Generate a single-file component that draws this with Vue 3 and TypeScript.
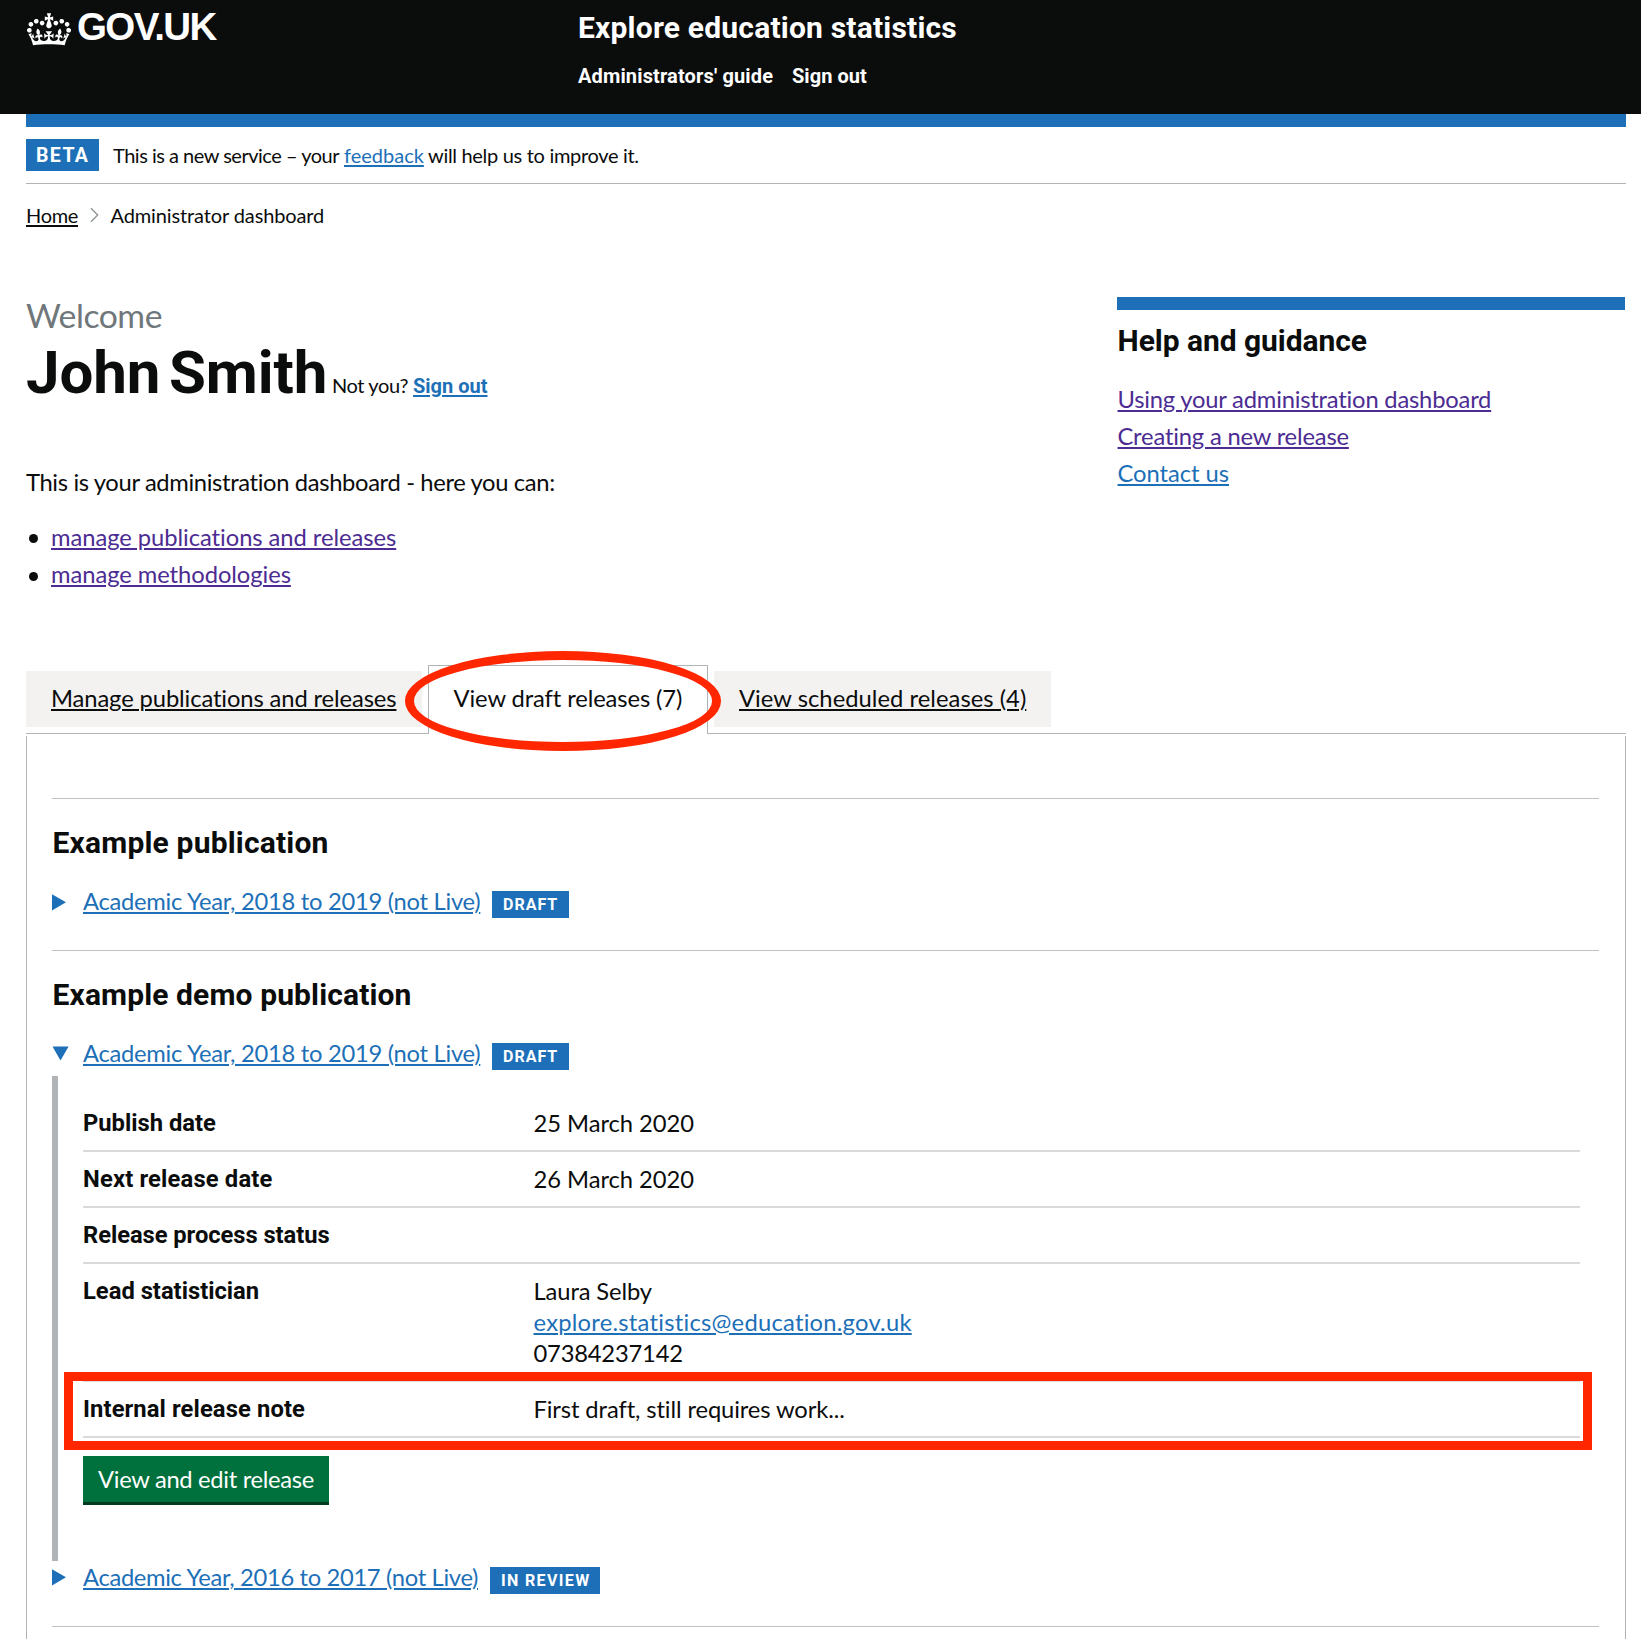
<script setup lang="ts">
interface Row {
  key: string
  lines: string[]
  email?: string
  phone?: string
  keyClass: string
  valueClass?: string
  highlighted?: boolean
}

const rows: Row[] = [
  { key: 'Publish date', lines: ['25 March 2020'], keyClass: 'k-publish', valueClass: 'v-date' },
  { key: 'Next release date', lines: ['26 March 2020'], keyClass: 'k-next', valueClass: 'v-date' },
  { key: 'Release process status', lines: [], keyClass: 'k-status' },
  {
    key: 'Lead statistician',
    lines: ['Laura Selby'],
    email: 'explore.statistics@education.gov.uk',
    phone: '07384237142',
    keyClass: 'k-lead',
    valueClass: 'v-name',
  },
  {
    key: 'Internal release note',
    lines: ['First draft, still requires work...'],
    keyClass: 'k-note',
    valueClass: 'v-note',
    highlighted: true,
  },
]
</script>

<template>
  <div class="page">
    <header class="header">
      <div class="brand">
        <svg class="crown" viewBox="0 0 132 97" aria-hidden="true">
          <path
            fill="currentColor"
            fill-rule="evenodd"
            d="M25 30.2c3.5 1.5 7.7-.2 9.1-3.7 1.5-3.6-.2-7.8-3.9-9.2-3.6-1.4-7.6.3-9.1 3.9-1.4 3.5.3 7.5 3.9 9zM9 39.5c3.6 1.5 7.8-.2 9.2-3.7 1.5-3.6-.2-7.8-3.9-9.1-3.6-1.5-7.6.2-9.1 3.8-1.4 3.5.3 7.5 3.8 9zM4.4 57.2c3.5 1.5 7.7-.2 9.1-3.8 1.5-3.6-.2-7.7-3.9-9.1-3.5-1.5-7.6.3-9.1 3.8-1.4 3.5.3 7.6 3.9 9.1zm38.3-21.4c3.5 1.5 7.7-.2 9.1-3.8 1.5-3.6-.2-7.7-3.9-9.1-3.6-1.5-7.6.3-9.1 3.8-1.3 3.6.4 7.7 3.9 9.1zm64.4-5.6c-3.6 1.5-7.8-.2-9.1-3.7-1.5-3.6.2-7.8 3.8-9.2 3.6-1.4 7.7.3 9.2 3.9 1.3 3.5-.4 7.5-3.9 9zm15.9 9.3c-3.6 1.5-7.7-.2-9.1-3.7-1.5-3.6.2-7.8 3.7-9.1 3.6-1.5 7.7.2 9.2 3.8 1.5 3.5-.3 7.5-3.8 9zm4.7 17.7c-3.6 1.5-7.8-.2-9.2-3.8-1.5-3.6.2-7.7 3.9-9.1 3.6-1.5 7.7.3 9.2 3.8 1.3 3.5-.4 7.6-3.9 9.1zM89.3 35.8c-3.6 1.5-7.8-.2-9.2-3.8-1.4-3.6.2-7.7 3.9-9.1 3.6-1.5 7.7.3 9.2 3.8 1.4 3.6-.3 7.7-3.9 9.1zM69.7 17.7l8.9 4.7V9.3l-8.9 2.8c-.2-.3-.5-.6-.9-.9L72.4 0H59.6l3.5 11.2c-.3.3-.6.5-.9.9l-8.8-2.8v13.1l8.8-4.7c.3.3.6.7.9.9l-5 15.4v.1c-.2.8-.4 1.6-.4 2.4 0 4.1 3.1 7.5 7 8.1h.2c.3 0 .7.1 1 .1.4 0 .7 0 1-.1h.2c4-.6 7.1-4.1 7.1-8.1 0-.8-.1-1.7-.4-2.4V34l-5.1-15.4c.4-.2.7-.6 1-.9zM66 92.8c16.9 0 32.8 1.1 47.1 3.2 4-16.9 8.9-26.7 14-33.5l-9.6-3.4c1 4.9 1.1 7.2 0 10.2-1.5-1.4-3-4.3-4.2-8.7L108.6 76c2.8-2 5-3.2 7.5-3.3-4.4 9.4-10 11.9-13.6 11.2-4.3-.8-6.3-4.6-5.6-7.9 1-4.7 5.7-5.9 8-.5 4.3-8.7-3-11.4-7.6-8.8 7.1-7.2 7.9-13.5 2.1-21.1-8 6.1-8.1 12.3-4.5 20.8-4.7-5.4-12.1-2.5-9.5 6.2 3.4-5.2 7.9-2 7.2 3.1-.6 4.3-6.4 7.8-13.5 7.2-10.3-.9-10.9-8-11.2-13.8 2.5-.5 7.1 1.8 11 7.3L80.2 60c-4.1 4.4-8 5.3-12.3 5.4 1.4-4.4 8-11.6 8-11.6H55.5s6.4 7.2 7.9 11.6c-4.2-.1-8-1-12.3-5.4l1.4 16.4c3.9-5.5 8.5-7.7 10.9-7.3-.3 5.8-.9 12.8-11.1 13.8-7.2.6-12.9-2.9-13.5-7.2-.7-5 3.8-8.3 7.1-3.1 2.7-8.7-4.6-11.6-9.4-6.2 3.7-8.5 3.6-14.7-4.6-20.8-5.8 7.6-5 13.9 2.2 21.1-4.7-2.6-11.9.1-7.7 8.8 2.3-5.5 7.1-4.2 8.1.5.7 3.3-1.3 7.1-5.7 7.9-3.5.7-9-1.8-13.5-11.2 2.5.1 4.7 1.3 7.5 3.3l-4.7-15.4c-1.2 4.4-2.7 7.2-4.3 8.7-1.1-3-.9-5.3 0-10.2l-9.5 3.4c5 6.9 9.9 16.7 14 33.5 14.8-2.1 30.8-3.2 47.7-3.2z"
          />
        </svg>
        <span class="brand-name">GOV.UK</span>
      </div>
      <div class="service">
        <div class="service-name">Explore education statistics</div>
        <nav class="service-nav">
          <span class="nav-guide">Administrators' guide</span>
          <span class="nav-out">Sign out</span>
        </nav>
      </div>
    </header>

    <div class="container">
      <div class="bar"></div>
      <div class="phase">
        <strong class="phase-tag">BETA</strong>
        <span class="phase-text">
          <span class="ph-a">This is a new service – your</span>
          <a class="ph-b link">feedback</a>
          <span class="ph-c">will help us to improve it.</span>
        </span>
      </div>

      <div class="crumbs">
        <a class="home">Home</a>
        <svg class="chevron" viewBox="0 0 9 16" aria-hidden="true">
          <path d="M1 1.2 7.7 8 1 14.8" fill="none" stroke="#8b9195" stroke-width="1.3" />
        </svg>
        <span class="crumb">Administrator dashboard</span>
      </div>

      <div class="intro">
        <div class="intro-main">
          <div class="welcome">Welcome</div>
          <div class="name-row">
            <h1 class="name">John Smith</h1>
            <span class="not-you">Not you?</span>
            <a class="link sign-out">Sign out</a>
          </div>
          <p class="lead">This is your administration dashboard - here you can:</p>
          <ul class="list">
            <li><a class="link visited l-pubs">manage publications and releases</a></li>
            <li><a class="link visited l-meth">manage methodologies</a></li>
          </ul>
        </div>
        <aside class="aside">
          <div class="bar"></div>
          <h2 class="heading aside-heading">Help and guidance</h2>
          <a class="link visited a-using">Using your administration dashboard</a>
          <a class="link visited a-creating">Creating a new release</a>
          <a class="link a-contact">Contact us</a>
        </aside>
      </div>

      <div class="tabs">
        <div class="tab tab-manage"><a class="tab-link t-manage">Manage publications and releases</a></div>
        <div class="tab tab-active">
          <span class="t-draft">View draft releases (7)</span>
          <div class="ring"></div>
        </div>
        <div class="tab tab-sched"><a class="tab-link t-sched">View scheduled releases (4)</a></div>
      </div>

      <div class="panel">
        <section class="publication">
          <h3 class="heading h-example">Example publication</h3>
          <div class="summary">
            <svg class="arrow" viewBox="0 0 31 31"><path d="M0 8.2 14 16.3 0 24.4z" fill="#1d70b8" /></svg>
            <a class="link s-2018">Academic Year, 2018 to 2019 (not Live)</a>
            <strong class="tag">DRAFT</strong>
          </div>
        </section>

        <section class="publication">
          <h3 class="heading h-demo">Example demo publication</h3>
          <div class="summary">
            <svg class="arrow" viewBox="0 0 31 31"><path d="M.5 8.5H16.6L8.5 22.4z" fill="#1d70b8" /></svg>
            <a class="link s-2018">Academic Year, 2018 to 2019 (not Live)</a>
            <strong class="tag">DRAFT</strong>
          </div>
          <div class="details">
            <div v-for="row in rows" :key="row.key" class="row">
              <div class="key" :class="row.keyClass">{{ row.key }}</div>
              <div class="value">
                <div v-for="line in row.lines" :key="line"><span :class="row.valueClass">{{ line }}</span></div>
                <div v-if="row.email"><a class="link v-email">{{ row.email }}</a></div>
                <div v-if="row.phone"><span class="v-phone">{{ row.phone }}</span></div>
              </div>
              <div v-if="row.highlighted" class="box"></div>
            </div>
            <button class="button" type="button">View and edit release</button>
          </div>
          <div class="summary summary-last">
            <svg class="arrow" viewBox="0 0 31 31"><path d="M0 8.2 14 16.3 0 24.4z" fill="#1d70b8" /></svg>
            <a class="link s-2016">Academic Year, 2016 to 2017 (not Live)</a>
            <strong class="tag tag-review">IN REVIEW</strong>
          </div>
        </section>
        <section class="publication"></section>
      </div>
    </div>
  </div>
</template>

<style>
body {
  margin: 0;
  background: #fff;
}
</style>

<style scoped>
.page {
  box-sizing: border-box;
  height: 1639px;
  overflow: hidden;
  display: flex;
  flex-direction: column;
  color: #0b0c0c;
  font-family: Lato, "Noto Sans", sans-serif;
  font-size: 23.75px;
  line-height: 31px;
  font-variant-ligatures: none;
  white-space: nowrap;
}
h1, h2, h3, p, ul { margin: 0; padding: 0; font-weight: 700; }
.link {
  color: #1d70b8;
  text-decoration: underline;
  text-decoration-thickness: 2px;
  text-underline-offset: 2px;
}
.visited { color: #4c2c92; }

.header {
  flex: none;
  box-sizing: border-box;
  height: 114px;
  padding-left: 27px;
  background: #0b0c0c;
  color: #fff;
  display: flex;
  align-items: flex-start;
  font-family: Roboto, sans-serif;
  font-weight: 700;
}
.brand { width: 551px; display: flex; padding-top: 7px; }
.crown { width: 44px; height: 33px; margin: 5.5px 6px 0 0; }
.brand-name { font: 700 38.5px/40px "Liberation Sans", sans-serif; letter-spacing: -1.6px; }
.service { padding-top: 9px; }
.service-name { font-size: 30px; line-height: 37px; letter-spacing: .2px; }
.service-nav { display: flex; font-size: 20px; line-height: 24px; margin-top: 18px; }
.nav-guide { width: 214px; letter-spacing: .14px; }
.nav-out { letter-spacing: .05px; }

.container {
  flex: 1;
  min-height: 0;
  margin: 0 15px 0 26px;
  display: flex;
  flex-direction: column;
}
.bar { flex: none; height: 13px; background: #1d70b8; }
.phase {
  flex: none;
  box-sizing: border-box;
  height: 57px;
  border-bottom: 1px solid #b1b4b6;
  padding-top: 12px;
  display: flex;
}
.phase-tag {
  box-sizing: border-box;
  width: 73px;
  height: 32px;
  padding: 1px 0 0 10px;
  background: #1d70b8;
  color: #fff;
  font: 700 19.5px/32px Roboto, sans-serif;
  letter-spacing: 1.4px;
}
.phase-text { display: flex; font-size: 20px; line-height: 24px; padding: 3.5px 0 0 14px; }
.ph-a { width: 231px; letter-spacing: -.49px; }
.ph-b { width: 84px; }
.ph-b.link, .sign-out.link { text-underline-offset: 1.5px; }
.ph-c { letter-spacing: -.31px; }

.crumbs { flex: none; display: flex; height: 66px; box-sizing: border-box; padding-top: 19px; font-size: 20px; line-height: 24px; }
.home { letter-spacing: -.33px; text-decoration: underline; text-decoration-thickness: 2px; text-underline-offset: 1.5px; width: 64px; }
.chevron { width: 9px; height: 16px; margin: 4px 11.5px 0 0; }
.crumb { letter-spacing: -.12px; }

.intro { flex: none; display: flex; justify-content: space-between; height: 415px; }
.intro-main { padding-top: 45px; }
.welcome { color: #6f777b; font-size: 33.75px; line-height: 40px; letter-spacing: -.48px; }
.name-row { display: flex; align-items: baseline; height: 75px; }
.name { font: 700 60px/75px Roboto, sans-serif; letter-spacing: -.1px; word-spacing: -6px; width: 306px; }
.not-you { font-size: 20px; line-height: 24px; letter-spacing: -.4px; width: 81px; }
.sign-out { font: 700 20px/24px Roboto, sans-serif; letter-spacing: 0; }
.lead { font-weight: 400; margin-top: 57px; letter-spacing: -.35px; }
.list { list-style: none; font-weight: 400; margin-top: 23.5px; }
.list li { display: flex; align-items: center; height: 31px; margin-bottom: 6.5px; }
.list li::before { content: ""; width: 9px; height: 9px; margin: 3px 13px 0 3px; border-radius: 50%; background: #0b0c0c; }
.l-pubs { letter-spacing: -.05px; }
.l-meth { letter-spacing: -.06px; }

.aside { width: 508px; margin-right: 1px; padding-top: 47px; display: flex; flex-direction: column; align-items: flex-start; }
.aside .bar { width: 100%; }
.heading { font: 700 30px/37px Roboto, sans-serif; padding-left: .5px; }
.aside-heading { margin: 12px 0 25px; letter-spacing: -.05px; }
.aside .link { margin: 0 0 6px .5px; }
.a-using { letter-spacing: -.2px; }
.a-creating { letter-spacing: -.18px; }
.a-contact { letter-spacing: -.05px; }

.tabs { flex: none; display: flex; align-items: flex-start; height: 69px; box-sizing: border-box; border-bottom: 1px solid #b1b4b6; }
.tab { box-sizing: border-box; height: 56px; margin: 6px 6px 0 0; padding: 12px 0 0 25px; background: #f3f2f1; }
.tab-manage { width: 396px; }
.tab-active { position: relative; width: 280px; height: 69px; margin-top: 0; padding: 17px 0 0 24.5px; background: #fff; border: 1px solid #b1b4b6; border-bottom: 0; }
.tab-sched { width: 337px; }
.tab-link { text-decoration: underline; text-decoration-thickness: 2px; text-underline-offset: 2px; }
.t-manage { letter-spacing: -.11px; }
.t-draft { letter-spacing: -.1px; }
.t-sched { letter-spacing: .04px; }
.ring {
  position: absolute;
  box-sizing: border-box;
  left: -24.4px;
  top: -14.7px;
  width: 316.4px;
  height: 99.4px;
  border: 9px solid #ff2600;
  border-radius: 50%;
  z-index: 2;
}

.panel { flex: 1; min-height: 0; margin-top: 2px; border: 1px solid #b1b4b6; border-width: 0 1px; padding: 62px 26px 0 25px; overflow: hidden; }
.publication { border-top: 1px solid #bfc1c3; padding-top: 25px; height: 126px; }
.publication + .publication { height: auto; padding-bottom: 33px; }
.h-example { letter-spacing: .18px; }
.h-demo { letter-spacing: .12px; }
.summary { display: flex; margin-top: 25px; height: 31px; }
.arrow { flex: none; width: 31px; height: 31px; margin-top: -.5px; }
.s-2018 { width: 409px; letter-spacing: -.28px; }
.s-2016 { width: 407px; letter-spacing: -.34px; }
.tag {
  box-sizing: border-box;
  width: 77px;
  height: 27px;
  margin-top: 5px;
  padding-left: 11px;
  background: #1d70b8;
  color: #fff;
  font: 700 16px/27px Roboto, sans-serif;
  letter-spacing: 1px;
}
.tag-review { width: 110px; letter-spacing: 1.35px; }
.details { box-sizing: border-box; height: 485.5px; margin-top: 6.5px; border-left: 6px solid #b1b4b6; padding: 20px 19px 0 25px; }
.summary-last { margin-top: .5px; }
.row { position: relative; display: flex; padding: 12px 0 11px; border-bottom: 2px solid #d8dadb; min-height: 31px; }
.key { width: 450.5px; padding-top: .6px; margin-bottom: -.6px; font-family: Roboto, sans-serif; font-weight: 700; }
.k-next { letter-spacing: .17px; }
.k-status { letter-spacing: -.06px; }
.k-note { letter-spacing: .11px; }
.v-date { letter-spacing: -.04px; }
.v-name { letter-spacing: -.12px; }
.v-email { letter-spacing: .24px; }
.v-phone { letter-spacing: -.2px; }
.v-note { letter-spacing: -.11px; }
.box {
  position: absolute;
  box-sizing: border-box;
  left: -19.5px;
  right: -11.5px;
  top: -10px;
  height: 78px;
  border: 9px solid #ff2600;
}
.button {
  display: block;
  box-sizing: border-box;
  width: 246px;
  height: 49px;
  margin: 18px 0 0;
  padding: 1px 0 0 15px;
  border: 0;
  border-bottom: 3px solid #003d20;
  background: #00703c;
  color: #fff;
  font: 400 23.75px/45px Lato, "Noto Sans", sans-serif;
  letter-spacing: -.31px;
  text-align: left;
  white-space: nowrap;
}
</style>
